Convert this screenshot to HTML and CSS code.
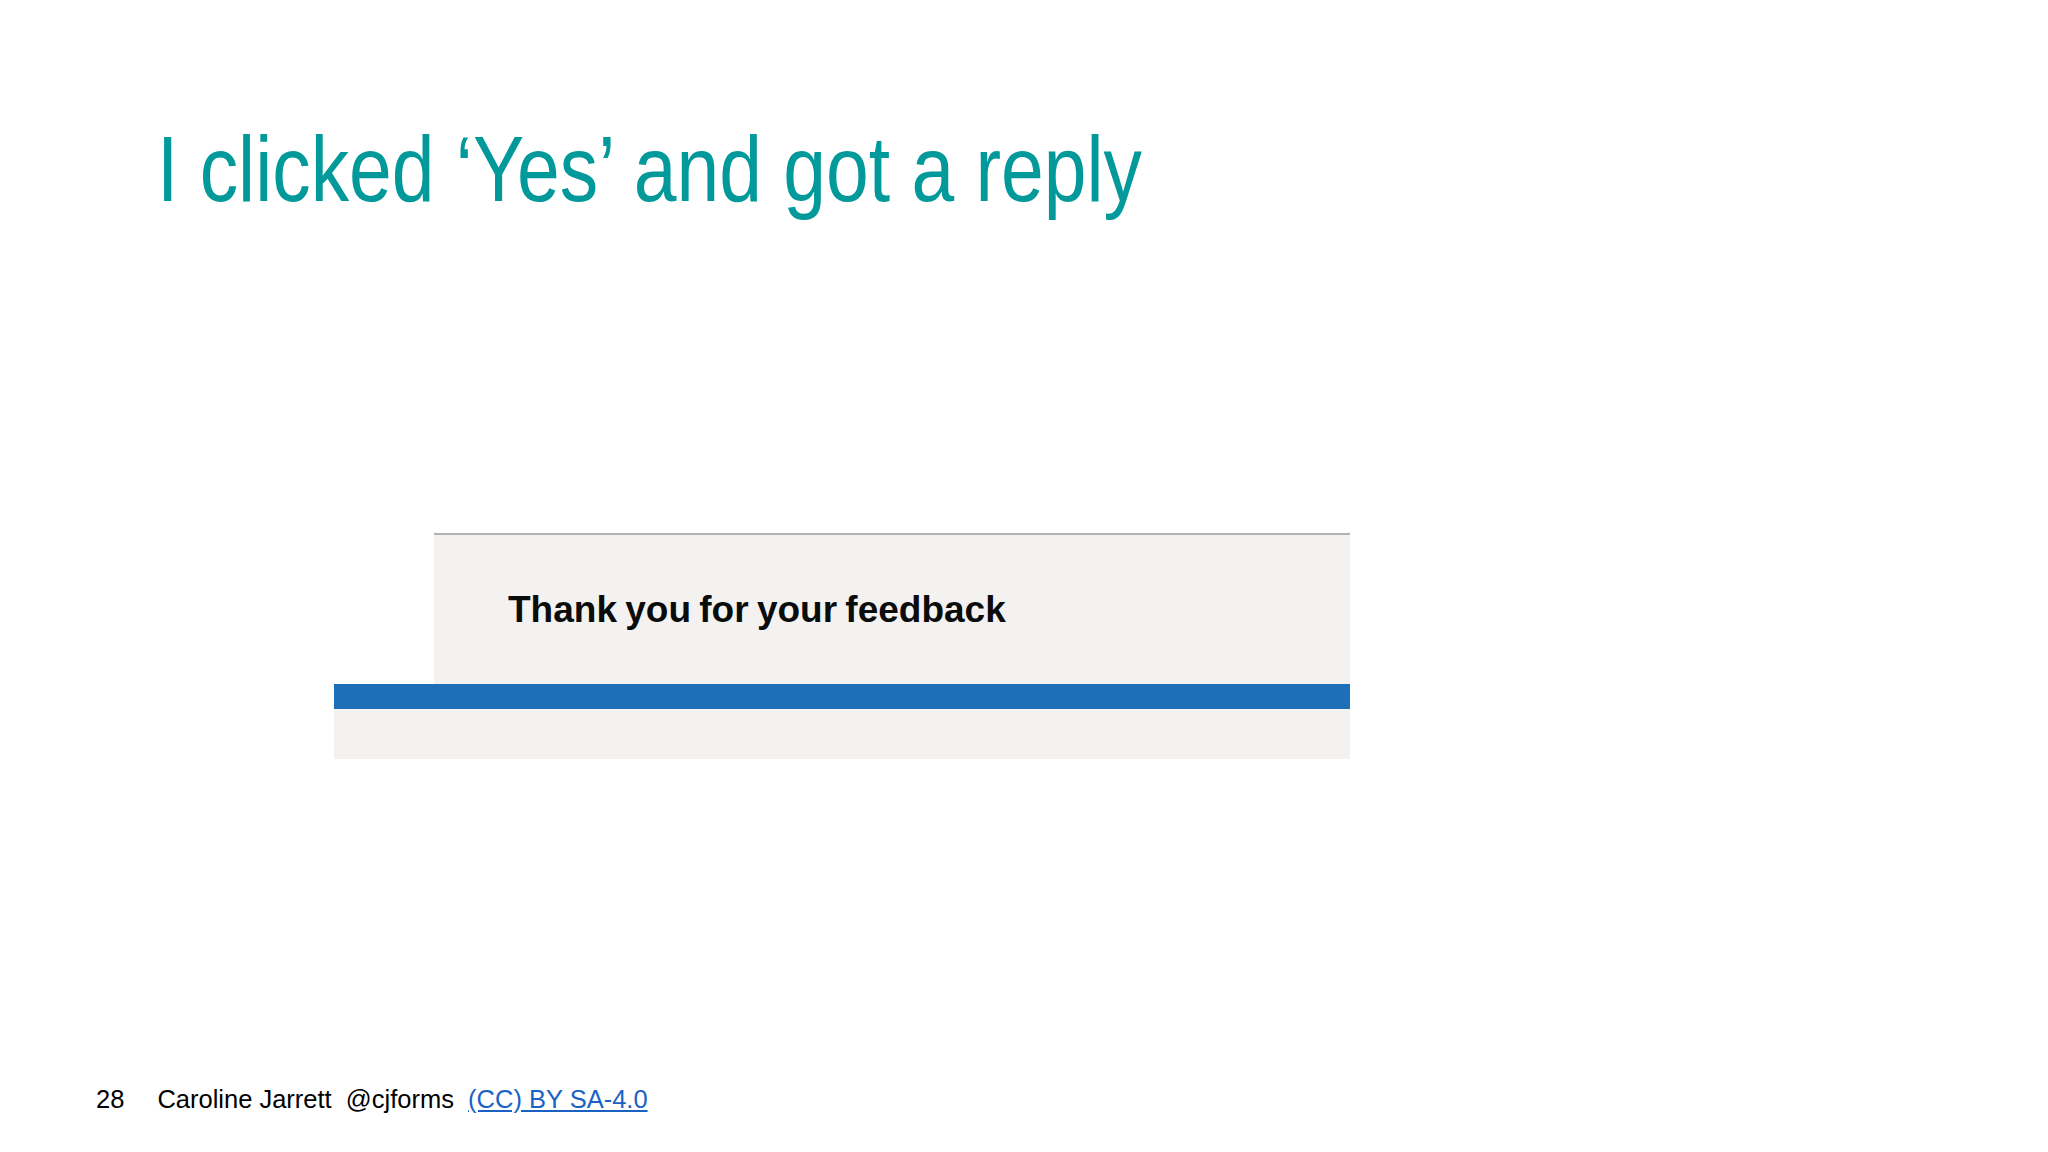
FILE: index.html
```html
<!DOCTYPE html>
<html lang="en">
<head>
<meta charset="utf-8">
<title>I clicked ‘Yes’ and got a reply</title>
<link rel="stylesheet" href="styles.css">
</head>
<body>
<div class="slide">
  <h1 class="title">I clicked ‘Yes’ and got a reply</h1>
  <div class="shot">
    <div class="shot-panel">
      <p class="shot-text">Thank you for your feedback</p>
    </div>
    <div class="shot-bar"></div>
    <div class="shot-foot"></div>
  </div>
  <div class="footer">
    <span class="page-num">28</span>
    <span class="credit">Caroline Jarrett&nbsp; @cjforms&nbsp; <a class="licence" href="#">(CC) BY SA-4.0</a></span>
  </div>
</div>
</body>
</html>
```
FILE: styles.css
```css
html, body {
  margin: 0;
  padding: 0;
  background: #ffffff;
}
.slide {
  width: 2048px;
  height: 1152px;
  display: flex;
  flex-direction: column;
  font-family: "Liberation Sans", Arial, sans-serif;
  overflow: hidden;
}
.title {
  margin: 123px 0 0 157px;
  font-family: "Liberation Sans", Arial, sans-serif;
  font-weight: normal;
  font-size: 93px;
  line-height: 93px;
  color: #02999a;
  white-space: nowrap;
  transform: scaleX(0.826);
  transform-origin: left center;
}
.shot {
  margin: 317px 0 0 334px;
  width: 1016px;
  display: flex;
  flex-direction: column;
}
.shot-panel {
  margin-left: 100px;
  background: #f3f2f1;
  border-top: 2px solid #b1b4b6;
  padding: 56px 74px;
}
.shot-text {
  margin: 0;
  font-family: "Liberation Sans", Arial, sans-serif;
  font-weight: bold;
  font-size: 37px;
  line-height: 37px;
  color: #0b0c0c;
  word-spacing: -2px;
}
.shot-bar {
  height: 25px;
  background: #1d70b8;
}
.shot-foot {
  height: 50px;
  background: #f3f2f1;
}
.footer {
  margin: 328px 0 0 96px;
  display: flex;
  gap: 33px;
  font-size: 25.5px;
  line-height: 25px;
  color: #000000;
}
.licence {
  color: #1a62c2;
  text-decoration: underline;
}
```
